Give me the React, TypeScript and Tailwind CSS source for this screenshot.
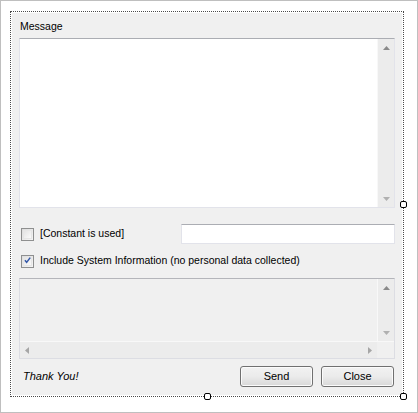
import React from "react";

const FONT = { fontFamily: '"Liberation Sans", Arial, sans-serif' };

function Arrow({ dir, color = "#a0a0a0" }: { dir: "up" | "down" | "left" | "right"; color?: string }) {
  const pts = {
    up: "0,4 3.5,0 7,4",
    down: "0,0 3.5,4 7,0",
    left: "4,0 0,3.5 4,7",
    right: "0,0 4,3.5 0,7",
  }[dir];
  const vertical = dir === "up" || dir === "down";
  return (
    <svg width={vertical ? 7 : 4} height={vertical ? 4 : 7} viewBox={vertical ? "0 0 7 4" : "0 0 4 7"}>
      <polygon points={pts} fill={color} />
    </svg>
  );
}

function VScroll({ className = "" }: { className?: string }) {
  return (
    <div className={`w-[17px] flex flex-col justify-between bg-[#ececec] border-l border-[#f8f8f8] ${className}`}>
      <div className="h-[17px] flex items-center justify-center">
        <Arrow dir="up" color="#8a8a8a" />
      </div>
      <div className="h-[17px] flex items-center justify-center">
        <Arrow dir="down" color="#b0b0b0" />
      </div>
    </div>
  );
}

function CheckBox({ checked }: { checked?: boolean }) {
  return (
    <div className="w-[13px] h-[13px] border border-[#8e8f8f] bg-gradient-to-br from-[#dcdcdc] to-[#f6f6f6] flex items-center justify-center">
      <div className="w-[9px] h-[9px] border border-[#e6e6e6] bg-gradient-to-br from-[#e4e4e4] to-[#fafafa] flex items-center justify-center">
        {checked && (
          <svg width="9" height="9" viewBox="0 0 9 9" className="-mt-[1px]">
            <path d="M1.2 4.3 L3.4 6.9 L8 0.8" fill="none" stroke="#3458a8" strokeWidth="2" />
          </svg>
        )}
      </div>
    </div>
  );
}

function Button({ label }: { label: string }) {
  return (
    <button
      type="button"
      className="w-[73px] h-[21px] rounded-[3px] border border-[#707070] bg-gradient-to-b from-[#f2f2f2] via-[#ebebeb] to-[#d8d8d8] text-[11px] text-black leading-none shadow-[inset_0_0_0_1px_#fbfbfb]"
    >
      {label}
    </button>
  );
}

function Handle({ className }: { className: string }) {
  return <div className={`absolute w-[7px] h-[7px] rounded-[2px] border border-black bg-white ${className}`} />;
}

export default function App() {
  return (
    <div className="w-[418px] h-[413px] border border-[#bfbfbf] bg-white" style={FONT}>
      <div className="relative ml-[9px] mt-[10px] w-[394px] h-[386px] border border-dotted border-[#4a4a4a] p-[1px]">
        <div className="w-full h-full bg-[#f0f0f0] pl-[7px] pt-[6px] text-[10.5px] text-black">
          <div className="leading-[14px] mb-[5px] pl-[1px]">Message</div>

          {/* Message box */}
          <div className="w-[376px] h-[170px] bg-white border border-[#e2e3ea] border-t-[#abadb3] flex justify-end">
            <VScroll />
          </div>

          {/* Constant row */}
          <div className="mt-[16px] h-[20px] w-[376px] flex items-center">
            <div className="ml-[2px]">
              <CheckBox />
            </div>
            <span className="ml-[6px]">[Constant is used]</span>
            <div className="ml-auto w-[214px] h-[20px] bg-white border border-[#e2e3ea] border-t-[#abadb3]" />
          </div>

          {/* System info row */}
          <div className="mt-[7px] h-[20px] flex items-center">
            <div className="ml-[2px]">
              <CheckBox checked />
            </div>
            <span className="ml-[6px]">Include System Information (no personal data collected)</span>
          </div>

          {/* System info box */}
          <div className="mt-[7px] w-[376px] h-[81px] bg-[#f0f0f0] border border-[#dcdde3] border-t-[#b4b5ba] flex flex-col">
            <div className="flex-1 flex justify-end">
              <VScroll />
            </div>
            <div className="h-[17px] flex border-t border-[#f8f8f8]">
              <div className="flex-1 bg-[#ececec] flex items-center justify-between px-[5px]">
                <Arrow dir="left" color="#a6a6a6" />
                <Arrow dir="right" color="#a6a6a6" />
              </div>
              <div className="w-[17px] bg-[#f0f0f0]" />
            </div>
          </div>

          {/* Footer */}
          <div className="mt-[7px] w-[375px] flex items-center">
            <span className="ml-[4px] italic text-[11px]">Thank You!</span>
            <div className="ml-auto flex gap-[8px]">
              <Button label="Send" />
              <Button label="Close" />
            </div>
          </div>
        </div>

        <Handle className="-right-[4px] top-[189px]" />
        <Handle className="left-[193px] -bottom-[4px]" />
        <Handle className="-right-[4px] -bottom-[4px]" />
      </div>
    </div>
  );
}
